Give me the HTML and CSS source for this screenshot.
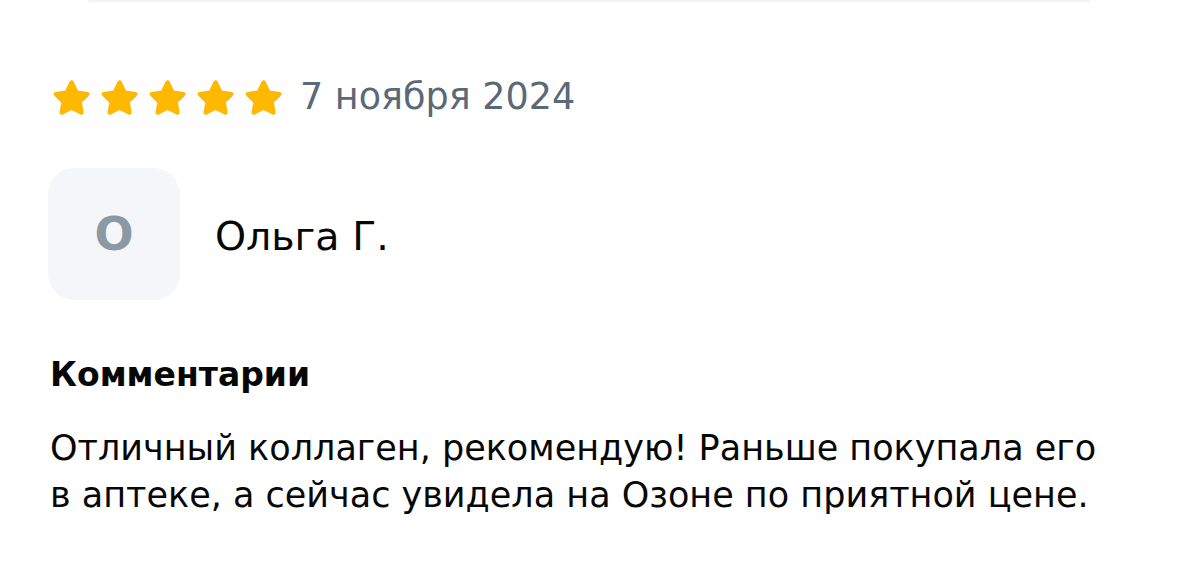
FILE: index.html
```html
<!DOCTYPE html>
<html lang="ru">
<head>
    <meta charset="UTF-8">
    <meta name="viewport" content="width=device-width, initial-scale=1.0">
    <title>Отзыв</title>
    <link rel="stylesheet" href="styles.css">
</head>
<body>
    <div class="prev-card-edge"></div>

    <div class="review">
        <div class="review-meta">
            <div class="stars">
                <svg class="star" viewBox="2.3 2.5 19.4 18.5"><path d="M12 2.6c.5 0 .9.3 1.1.7l2.3 4.7 5.1.8c1 .1 1.4 1.3.7 2l-3.7 3.6.9 5.1c.2 1-.9 1.7-1.7 1.2L12 18.3l-4.6 2.4c-.9.5-1.9-.3-1.7-1.2l.9-5.1-3.7-3.6c-.7-.7-.3-1.9.7-2l5.1-.8 2.3-4.7c.2-.4.6-.7 1-.7z"/></svg>
                <svg class="star" viewBox="2.3 2.5 19.4 18.5"><path d="M12 2.6c.5 0 .9.3 1.1.7l2.3 4.7 5.1.8c1 .1 1.4 1.3.7 2l-3.7 3.6.9 5.1c.2 1-.9 1.7-1.7 1.2L12 18.3l-4.6 2.4c-.9.5-1.9-.3-1.7-1.2l.9-5.1-3.7-3.6c-.7-.7-.3-1.9.7-2l5.1-.8 2.3-4.7c.2-.4.6-.7 1-.7z"/></svg>
                <svg class="star" viewBox="2.3 2.5 19.4 18.5"><path d="M12 2.6c.5 0 .9.3 1.1.7l2.3 4.7 5.1.8c1 .1 1.4 1.3.7 2l-3.7 3.6.9 5.1c.2 1-.9 1.7-1.7 1.2L12 18.3l-4.6 2.4c-.9.5-1.9-.3-1.7-1.2l.9-5.1-3.7-3.6c-.7-.7-.3-1.9.7-2l5.1-.8 2.3-4.7c.2-.4.6-.7 1-.7z"/></svg>
                <svg class="star" viewBox="2.3 2.5 19.4 18.5"><path d="M12 2.6c.5 0 .9.3 1.1.7l2.3 4.7 5.1.8c1 .1 1.4 1.3.7 2l-3.7 3.6.9 5.1c.2 1-.9 1.7-1.7 1.2L12 18.3l-4.6 2.4c-.9.5-1.9-.3-1.7-1.2l.9-5.1-3.7-3.6c-.7-.7-.3-1.9.7-2l5.1-.8 2.3-4.7c.2-.4.6-.7 1-.7z"/></svg>
                <svg class="star" viewBox="2.3 2.5 19.4 18.5"><path d="M12 2.6c.5 0 .9.3 1.1.7l2.3 4.7 5.1.8c1 .1 1.4 1.3.7 2l-3.7 3.6.9 5.1c.2 1-.9 1.7-1.7 1.2L12 18.3l-4.6 2.4c-.9.5-1.9-.3-1.7-1.2l.9-5.1-3.7-3.6c-.7-.7-.3-1.9.7-2l5.1-.8 2.3-4.7c.2-.4.6-.7 1-.7z"/></svg>
            </div>
            <span class="review-date">7 ноября 2024</span>
        </div>

        <div class="author">
            <div class="avatar">О</div>
            <div class="author-name">Ольга Г.</div>
        </div>

        <h3 class="section-title">Комментарии</h3>
        <p class="review-text">Отличный коллаген, рекомендую! Раньше покупала его<br>в аптеке, а сейчас увидела на Озоне по приятной цене.</p>
    </div>
</body>
</html>
```

FILE: styles.css
```css
/* --- Page --- */
body {
    margin: 0;
    background-color: #fff;
    color: #070707;
    font-family: 'DejaVu Sans', 'Noto Sans', sans-serif;
}

/* bottom edge of the card above, cut by the screenshot */
.prev-card-edge {
    height: 2px;
    margin: 0 89px 0 88px;
    background-color: #f4f4f6;
    box-shadow: 0 1px 6px rgba(0, 0, 0, 0.04);
}

/* --- Review block --- */
.review {
    padding: 75px 48px 0 50px;
}

.review-meta {
    display: flex;
    align-items: center;
    gap: 18px;
}

.stars {
    display: flex;
    gap: 11px;
    margin-left: 3px;
}

.star {
    width: 37px;
    height: 35px;
    fill: #ffb800;
}

.review-date {
    font-size: 36.5px;
    line-height: 40px;
    color: #5b6878;
}

.author {
    display: flex;
    align-items: center;
    gap: 35px;
    margin-top: 51px;
}

.avatar {
    width: 132px;
    height: 132px;
    border-radius: 26px;
    background-color: #f5f6fa;
    display: flex;
    justify-content: center;
    align-items: center;
    font-size: 46px;
    font-weight: 700;
    line-height: 1;
    color: #8d98a5;
    margin-left: -2px;
}

.author-name {
    font-size: 39.5px;
    line-height: 44px;
    margin-top: 4px;
}

.section-title {
    margin: 53px 0 0;
    font-size: 33px;
    font-weight: 700;
    line-height: 44px;
}

.review-text {
    margin: 28px 0 0;
    font-size: 35px;
    line-height: 47px;
}
```
